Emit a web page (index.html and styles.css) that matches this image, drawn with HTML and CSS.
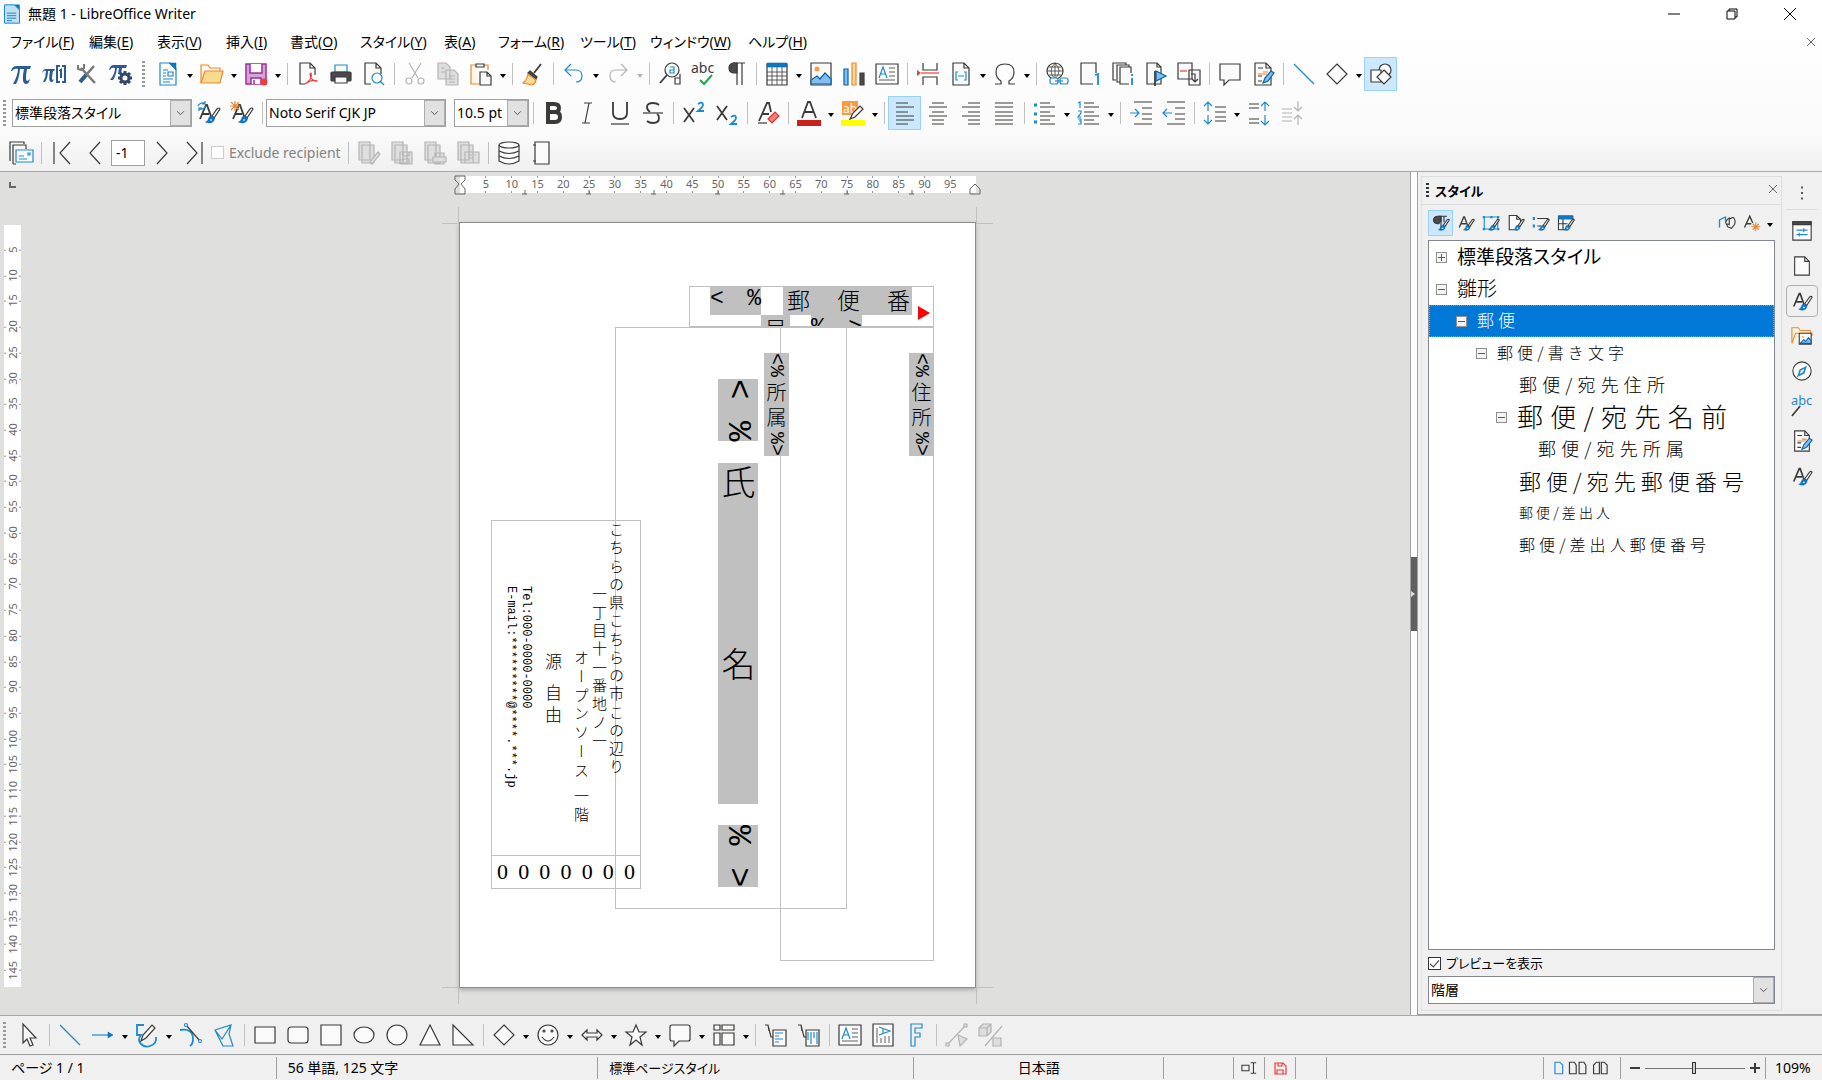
FILE: index.html
```html
<!DOCTYPE html>
<html lang="ja">
<head>
<meta charset="utf-8">
<title>無題 1 - LibreOffice Writer</title>
<link rel="stylesheet" href="styles.css">
</head>
<body>
<svg class="defs" aria-hidden="true">
  <symbol id="brush" viewBox="0 0 24 24"><path class="paper" d="M15 15l5-7q2-2 3 0l-6 9z"/><path class="bluefill" d="M14.500 15c-4 0-2 5-6 6 4 2 9 1 9-4z"/><path class="tip" d="M13 19h2"/></symbol>
  <symbol id="styleA" viewBox="0 0 24 24"><path class="thick" d="M3 18L9 4h1l5 14M5 13h7"/><use href="#brush"/></symbol>
  <symbol id="pencil" viewBox="0 0 24 24"><path class="sky" d="M12 21l2-5 6-7 3 2-6 8z"/></symbol>
  <symbol id="note" viewBox="0 0 24 24"><path class="paper" d="M4 1h11l5 5v17H4zM15 1v5h5"/><path d="M7 6h5M7 14h4M7 19h4"/><path class="o" d="M12 10h5M7 12h9"/><use href="#pencil"/></symbol>
  <symbol id="chev" viewBox="0 0 12 12"><path d="M2 4l4 4 4-4"/></symbol>
</svg>

<header class="top">
  <div class="titlebar">
    <svg class="i logo" viewBox="0 0 24 24"><path class="b lightblue" d="M3 1h12l6 6v16H3z"/><path class="bluefill" d="M15 1h6v6z"/><path class="b" d="M6 11h11M6 14h11M6 17h11M6 20h6"/></svg>
    <h1>無題 1 - LibreOffice Writer</h1>
    <div class="winbtns">
      <button aria-label="最小化"><svg viewBox="0 0 12 12"><path d="M0 6h12"/></svg></button>
      <button aria-label="元に戻す"><svg viewBox="0 0 12 12"><path d="M1 3h8v8H1zM3 3V1h8v8H9"/></svg></button>
      <button aria-label="閉じる"><svg viewBox="0 0 12 12"><path d="M0 0l12 12M12 0L0 12"/></svg></button>
    </div>
  </div>
  <nav class="menubar">
    <button class="kana">ファイル(<u>F</u>)</button><button>編集(<u>E</u>)</button><button>表示(<u>V</u>)</button><button>挿入(<u>I</u>)</button><button>書式(<u>O</u>)</button><button class="kana">スタイル(<u>Y</u>)</button><button>表(<u>A</u>)</button><button class="kana">フォーム(<u>R</u>)</button><button class="kana">ツール(<u>T</u>)</button><button class="kana">ウィンドウ(<u>W</u>)</button><button class="kana">ヘルプ(<u>H</u>)</button>
    <button class="closedoc" aria-label="文書を閉じる"><svg viewBox="0 0 12 12"><path d="M2 2l8 8M10 2l-8 8"/></svg></button>
  </nav>

  <div class="bar bar1">
    <button class="tb" aria-label="数式"><svg class="i pi" viewBox="0 0 24 24"><path d="M2 9Q3 4 8 4h14l-1 3h-3q-2 11 0 12 1 0 3-2-1 5-4 5-5 0-2-15h-4q-1 10-4 15H4Q9 13 9 7 5 6 3 9z"/></svg></button>
    <button class="tb" aria-label="数式番号"><svg class="i pi" viewBox="0 0 24 24"><path d="M0 11q1-4 4-4h9l-1 2h-1q-2 9 0 9l1-1q-1 4-3 3-3-1-1-11H6Q6 16 3 20H1q3-5 3-11-2-1-4 2zM14 3h4v2h-2v14h2v2h-4zM20 3h4v18h-4v-2h2V5h-2zM17 8l3-2v10h-2V9h-1z"/></svg></button>
    <button class="tb" aria-label="ツール"><svg class="i" viewBox="0 0 24 24"><path class="metal" d="M6 6l14 15"/><path class="metal" d="M19 4L12 12"/><path class="handle" d="M11 13l-6 7"/><path class="metal ring" d="M3 3v4l3 1 3-2V2"/></svg></button>
    <button class="tb" aria-label="数式設定"><svg class="i pi" viewBox="0 0 24 24"><path d="M1 8q1-5 5-5h13l-1 3h-4l-1 6h-3l1-6H9q-1 8-4 12H2Q7 12 7 6 3 5 2 8z"/><circle class="gear" cx="17" cy="16" r="4"/><path class="teeth" d="M17 9v3M17 20v3M10 16h3M21 16h3M12 11l2 2M20 19l2 2M22 11l-2 2M12 21l2-2"/></svg></button>
    <span class="grip"></span>
    <button class="tb" aria-label="新規"><svg class="i" viewBox="0 0 24 24"><path class="b paper" d="M4 1h10l6 6v16H4z"/><path class="bluefill" d="M13 1h7v7z"/><path class="b" d="M7 8h5M7 11h3M7 14h3M7 17h10M7 20h7M12 10h5v4h-5z"/></svg></button><button class="dd" aria-label="新規の一覧"></button>
    <button class="tb" aria-label="開く"><svg class="i" viewBox="0 0 24 24"><path class="o cream" d="M1 21V3h7l2 3h10v3"/><path class="o sand" d="M1 21L5 9h18l-3 12z"/></svg></button><button class="dd" aria-label="最近使用したファイル"></button>
    <button class="tb" aria-label="保存"><svg class="i" viewBox="0 0 24 24"><path class="p lilac" d="M2 2h20v20H2z"/><path class="p" d="M6 2v9h12V2M7 22v-6h10v6M10 22v-4"/><circle class="redfill" cx="20" cy="20" r="3.500"/></svg></button><button class="dd" aria-label="保存の一覧"></button>
    <span class="sep"></span>
    <button class="tb" aria-label="PDF"><svg class="i" viewBox="0 0 24 24"><path class="paper" d="M9 22H4V1h10l5 5v7M14 1v5h5"/><path class="r" d="M9 22q8-5 6-11-2 0 0 5 3 4 6 3-5-2-12 3"/></svg></button>
    <button class="tb" aria-label="印刷"><svg class="i" viewBox="0 0 24 24"><path class="b paper" d="M6 3h12v7H6z"/><rect class="dark" x="2" y="10" width="20" height="9" rx="1"/><path class="paper" d="M6 15h12v6H6z"/></svg></button>
    <button class="tb" aria-label="印刷プレビュー"><svg class="i" viewBox="0 0 24 24"><path class="paper" d="M9 22H3V1h11l5 5v6M14 1v5h5"/><circle class="b paper" cx="15" cy="16" r="5"/><path class="b" d="M18 19l4 4"/></svg></button>
    <span class="sep"></span>
    <button class="tb off" aria-label="切り取り"><svg class="i" viewBox="0 0 24 24"><path d="M6 1l9 15M18 1L9 16"/><circle cx="6" cy="19" r="3"/><circle cx="18" cy="19" r="3"/></svg></button>
    <button class="tb off" aria-label="コピー"><svg class="i" viewBox="0 0 24 24"><path class="ash" d="M2 17V1h8l4 4v12zM10 8h8l4 4v11H10z"/><path d="M5 6h4M5 10h4M13 14h6M13 17h6M13 20h6"/></svg></button>
    <button class="tb" aria-label="貼り付け"><svg class="i" viewBox="0 0 24 24"><path class="o cream" d="M7 3H2v19h8M15 3h4v5"/><path d="M7 5V2h8v3z"/><path class="paper" d="M11 10h7l4 4v9H11zM18 10v4h4"/></svg></button><button class="dd" aria-label="貼り付け形式"></button>
    <span class="sep"></span>
    <button class="tb" aria-label="書式のコピー"><svg class="i" viewBox="0 0 24 24"><path class="thick" d="M20 2l-7 9"/><path class="dark" d="M9 9l7 6-1 2-8-6z"/><path class="o sand" d="M7 12l8 6q-1 4-4 5L2 21q4-3 5-9z"/></svg></button>
    <span class="sep"></span>
    <button class="tb" aria-label="元に戻す"><svg class="i" viewBox="0 0 24 24"><path class="b" d="M9 2L3 8l6 6M3 8h11q6 0 6 6t-6 6"/></svg></button><button class="dd" aria-label="元に戻す一覧"></button>
    <button class="tb off" aria-label="やり直し"><svg class="i" viewBox="0 0 24 24"><path d="M15 2l6 6-6 6M21 8H10q-6 0-6 6t6 6"/></svg></button><button class="dd off" aria-label="やり直し一覧"></button>
    <span class="sep"></span>
    <button class="tb" aria-label="検索と置換"><svg class="i" viewBox="0 0 24 24"><circle class="paper" cx="14" cy="8" r="7"/><path class="thick" d="M9 13l-7 8"/><path class="b" d="M12 5h4v6h-4V8h4"/><path d="M22 12v10h-5v-6h5"/></svg></button>
    <button class="tb" aria-label="スペルチェック"><svg class="i" viewBox="0 0 24 24"><text x="0" y="11">abc</text><path class="gr" d="M9 18l4 4 8-9"/></svg></button>
    <button class="tb" aria-label="編集記号"><svg class="i" viewBox="0 0 24 24"><path d="M9 1h12M13 1v22M18 1v22"/><path class="dark" d="M13 1H9Q5 2 5 6t4 5h4z"/></svg></button>
    <span class="sep"></span>
    <button class="tb" aria-label="表"><svg class="i" viewBox="0 0 24 24"><path class="paper" d="M2 2h20v21H2z"/><path class="hair" d="M2 10h20M2 14h20M2 18h20M7 5v18M12 5v18M17 5v18"/><path class="bluefill" d="M2 1h20v4H2z"/></svg></button><button class="dd" aria-label="表の大きさ"></button>
    <button class="tb" aria-label="画像"><svg class="i" viewBox="0 0 24 24"><path class="paper" d="M2 1h20v22H2z"/><circle class="orangefill" cx="8" cy="7" r="2.500"/><path class="sky" d="M2 22v-4l6-4 3 3 5-6 6 6v5z"/></svg></button>
    <button class="tb" aria-label="グラフ"><svg class="i" viewBox="0 0 24 24"><path class="sky" d="M2 7h4v16H2z"/><path class="o sand" d="M10 1h4v22h-4z"/><path class="dark" d="M18 11h4v12h-4z"/></svg></button>
    <button class="tb" aria-label="テキストボックス"><svg class="i" viewBox="0 0 24 24"><path class="paper" d="M1 2h22v20H1z"/><path class="b" d="M4 16L8 5l4 11M5 12h6"/><path class="hair" d="M14 6h6M14 10h6M14 14h6M4 18h16"/></svg></button>
    <span class="sep"></span>
    <button class="tb" aria-label="改ページ"><svg class="i" viewBox="0 0 24 24"><path d="M7 1v7h14V1M7 23v-8h14v8"/><path class="r" d="M5 11h18"/><path class="redfill" d="M1 8l4 3-4 3z"/></svg></button>
    <button class="tb" aria-label="フィールド"><svg class="i" viewBox="0 0 24 24"><path class="paper" d="M4 1h11l5 5v17H4zM15 1v5h5"/><path class="b" d="M9 10H7v8h2M15 10h2v8h-2M9 14h6"/></svg></button><button class="dd" aria-label="フィールド一覧"></button>
    <button class="tb" aria-label="特殊文字"><svg class="i" viewBox="0 0 24 24"><path d="M2 22h6v-3Q3 16 3 10q0-8 9-8t9 8q0 6-5 9v3h6"/></svg></button><button class="dd" aria-label="特殊文字一覧"></button>
    <span class="sep"></span>
    <button class="tb" aria-label="ハイパーリンク"><svg class="i" viewBox="0 0 24 24"><circle cx="10" cy="9" r="8"/><path class="hair" d="M2 9h16M4 5h12M4 13h12M10 1v16M10 1q-8 8 0 16M10 1q8 8 0 16"/><rect class="b paper" x="5" y="16" width="8" height="6" rx="2"/><rect class="b paper" x="15" y="16" width="8" height="6" rx="2"/><path class="b" d="M10 19h8"/></svg></button>
    <button class="tb" aria-label="脚注"><svg class="i" viewBox="0 0 24 24"><path class="paper" d="M18 11V1H3v21h12"/><path class="b thick" d="M17 13l3-1v11"/></svg></button>
    <button class="tb" aria-label="文末脚注"><svg class="i" viewBox="0 0 24 24"><path d="M5 18H2V1h13v2M9 20H6V3h12v2"/><path class="paper" d="M18 22H9V5h11v6"/><path class="b thick" d="M21 16v7M21 12v2"/></svg></button>
    <button class="tb" aria-label="ブックマーク"><svg class="i" viewBox="0 0 24 24"><path class="paper" d="M3 22V1h10l4 4v17zM13 1v4h4"/><path class="thick" d="M11 9v15"/><path class="sky" d="M12 9l10 5-10 5z"/></svg></button>
    <button class="tb" aria-label="相互参照"><svg class="i" viewBox="0 0 24 24"><path class="paper" d="M1 1h14v16H1zM12 8h11v15H12z"/><path class="r" d="M3 9h7"/><path d="M14 12h4v7M15 17l3 3 3-3"/></svg></button>
    <span class="sep"></span>
    <button class="tb" aria-label="コメント"><svg class="i" viewBox="0 0 24 24"><path class="paper" d="M2 2h20v16H11l-5 5v-5H2z"/></svg></button>
    <button class="tb" aria-label="変更の記録"><svg class="i" viewBox="0 0 24 24"><use href="#note"/></svg></button>
    <span class="sep"></span>
    <button class="tb" aria-label="線"><svg class="i" viewBox="0 0 24 24"><path class="b" d="M2 2l20 20"/></svg></button>
    <button class="tb" aria-label="図形"><svg class="i" viewBox="0 0 24 24"><path class="paper" d="M12 2l10 10-10 10L2 12z"/></svg></button><button class="dd" aria-label="図形一覧"></button>
    <button class="tb on" aria-label="図形描画"><svg class="i" viewBox="0 0 24 24"><circle class="paper" cx="16" cy="8" r="6"/><path class="paper" d="M2 8h10v12H2z"/><path class="paper" d="M15 8l7 7-7 7-7-7z"/></svg></button>
  </div>

  <div class="bar bar2">
    <span class="grip"></span>
    <span class="combo w180"><select class="kana" aria-label="段落スタイル"><option>標準段落スタイル</option></select><svg class="chev"><use href="#chev"/></svg></span>
    <button class="tb" aria-label="スタイルの更新"><svg class="i" viewBox="0 0 24 24"><use href="#styleA"/><path class="b" d="M1 5q2-4 7-3M8 0v3H5M9 5q-2 4-7 3M2 10V7h3"/></svg></button>
    <button class="tb" aria-label="新規スタイル"><svg class="i" viewBox="0 0 24 24"><use href="#styleA"/><path class="o" d="M5 0v10M0 5h10M1 1l8 8M9 1L1 9"/></svg></button>
    <span class="sep"></span>
    <span class="combo w180"><select aria-label="フォント名"><option>Noto Serif CJK JP</option></select><svg class="chev"><use href="#chev"/></svg></span>
    <span class="combo w75"><select aria-label="フォントサイズ"><option>10.5 pt</option></select><svg class="chev"><use href="#chev"/></svg></span>
    <span class="sep"></span>
    <button class="tb" aria-label="太字"><svg class="i" viewBox="0 0 24 24"><path class="heavy" d="M6 3h6q5 0 5 4t-5 4H6zM6 11h7q5 0 5 5t-5 5H6z"/></svg></button>
    <button class="tb" aria-label="斜体"><svg class="i" viewBox="0 0 24 24"><path d="M9 2h8M7 22h8M14 2l-4 20"/></svg></button>
    <button class="tb" aria-label="下線"><svg class="i" viewBox="0 0 24 24"><path class="thick" d="M5 1v11q0 6 7 6t7-6V1"/><path d="M3 23h18"/></svg></button>
    <button class="tb" aria-label="取り消し線"><svg class="i" viewBox="0 0 24 24"><path class="thick" d="M18 4q-2-2-6-2-6 0-6 4 0 3 3 5M16 13q2 1 2 4 0 5-6 5-4 0-6-2"/><path d="M2 12h20"/></svg></button>
    <span class="sep"></span>
    <button class="tb" aria-label="上付き"><svg class="i" viewBox="0 0 24 24"><path class="thick" d="M2 7l10 14M12 7L2 21"/><path class="b thick" d="M16 3q5-3 5 1 0 2-5 6h6"/></svg></button>
    <button class="tb" aria-label="下付き"><svg class="i" viewBox="0 0 24 24"><path class="thick" d="M2 5l10 14M12 5L2 19"/><path class="b thick" d="M16 16q5-3 5 1 0 2-5 6h6"/></svg></button>
    <span class="sep"></span>
    <button class="tb" aria-label="書式のクリア"><svg class="i" viewBox="0 0 24 24"><path class="thick" d="M3 20L11 2h2l2 9M6 13h7"/><path d="M2 22h9"/><path class="pink" d="M12 18l7-7 4 4-7 7z"/></svg></button>
    <span class="sep"></span>
    <button class="tb" aria-label="文字の色"><svg class="i" viewBox="0 0 24 24"><path class="thick" d="M5 17L11 1h2l6 16M7 11h10"/><path class="crimson" d="M0 19h24v6H0z"/></svg></button><button class="dd" aria-label="文字の色一覧"></button>
    <button class="tb" aria-label="蛍光ペン"><svg class="i" viewBox="0 0 24 24"><path class="orangefill" d="M1 0h16v14H1z"/><text class="wt" x="2" y="12">ab</text><path class="paper" d="M9 18l3-6 7-7 3 3-8 8z"/><path class="yellow" d="M0 19h24v6H0z"/></svg></button><button class="dd" aria-label="蛍光ペン一覧"></button>
    <span class="sep"></span>
    <button class="tb on" aria-label="左揃え"><svg class="i" viewBox="0 0 24 24"><path d="M3 2h12M3 6h18M3 11h12M3 15h18M3 19h18M3 23h12"/></svg></button>
    <button class="tb" aria-label="中央揃え"><svg class="i" viewBox="0 0 24 24"><path d="M6 2h12M3 6h18M6 11h12M3 15h18M6 19h12M6 23h12"/></svg></button>
    <button class="tb" aria-label="右揃え"><svg class="i" viewBox="0 0 24 24"><path d="M9 2h12M3 6h18M9 11h12M3 15h18M9 19h12M9 23h12"/></svg></button>
    <button class="tb" aria-label="両端揃え"><svg class="i" viewBox="0 0 24 24"><path d="M3 2h18M3 6h18M3 11h18M3 15h18M3 19h18M3 23h18"/></svg></button>
    <span class="sep"></span>
    <button class="tb" aria-label="箇条書き"><svg class="i" viewBox="0 0 24 24"><path d="M7 2h10M7 6h15M7 11h10M7 15h15M7 19h10M7 23h15"/><path class="b bullet" d="M1 4h3M1 13h3M1 21h3"/></svg></button><button class="dd" aria-label="箇条書き一覧"></button>
    <button class="tb" aria-label="番号付け"><svg class="i" viewBox="0 0 24 24"><path d="M7 2h10M7 6h15M7 11h10M7 15h15M7 19h10M7 23h15"/><path class="b" d="M1 2l2-1v6M1 10h3v2l-3 4h3M1 18h3v5H1M2 20h2"/></svg></button><button class="dd" aria-label="番号付け一覧"></button>
    <span class="sep"></span>
    <button class="tb" aria-label="インデントを増やす"><svg class="i" viewBox="0 0 24 24"><path d="M5 1h18M13 7h10M13 13h10M13 18h10M5 23h18"/><path class="b" d="M1 12h9M6 8l4 4-4 4"/></svg></button>
    <button class="tb" aria-label="インデントを減らす"><svg class="i" viewBox="0 0 24 24"><path d="M5 1h18M13 7h10M13 13h10M13 18h10M5 23h18"/><path class="b" d="M1 12h9M5 8l-4 4 4 4"/></svg></button>
    <span class="sep"></span>
    <button class="tb" aria-label="行間"><svg class="i" viewBox="0 0 24 24"><path d="M12 6h11M12 11h11M12 16h11M12 20h11"/><path class="b" d="M5 1v9M1 5l4-4 4 4M5 14v9M1 19l4 4 4-4"/></svg></button><button class="dd" aria-label="行間一覧"></button>
    <button class="tb" aria-label="段落間隔を増やす"><svg class="i" viewBox="0 0 24 24"><path d="M2 3h10M2 7h10M2 18h10M2 22h10"/><path class="b" d="M18 1v9M14 5l4-4 4 4M18 14v10M14 20l4 4 4-4"/></svg></button>
    <button class="tb off" aria-label="段落間隔を減らす"><svg class="i" viewBox="0 0 24 24"><path d="M2 8h10M2 12h10M2 16h10M2 20h10M18 0v10M14 6l4 4 4-4M18 24V14M14 18l4-4 4 4"/></svg></button>
  </div>

  <div class="bar bar3">
    <button class="tb" aria-label="差し込み印刷"><svg class="i" viewBox="0 0 24 24"><path d="M1 20V1h14v2M4 23V4h13v4M4 23h3"/><path class="b paper" d="M7 9h17v12H7z"/><path class="b" d="M10 15h5M10 18h8M19 12h2v2h-2z"/></svg></button>
    <span class="sep"></span>
    <button class="tb" aria-label="最初"><svg class="i" viewBox="0 0 24 24"><path d="M4 1v22M20 1L10 12l10 11"/></svg></button>
    <button class="tb" aria-label="前"><svg class="i" viewBox="0 0 24 24"><path d="M17 1L7 12l10 11"/></svg></button>
    <input class="num" type="text" value="-1" aria-label="レコード番号">
    <button class="tb" aria-label="次"><svg class="i" viewBox="0 0 24 24"><path d="M7 1l10 11L7 23"/></svg></button>
    <button class="tb" aria-label="最後"><svg class="i" viewBox="0 0 24 24"><path d="M4 1l10 11L4 23M19 1v22"/></svg></button>
    <label class="excl"><input type="checkbox" disabled>Exclude recipient</label>
    <span class="sep"></span>
    <button class="tb off" aria-label="文書の編集"><svg class="i" viewBox="0 0 24 24"><path class="ash" d="M2 1h11v18H2zM5 4h12v18H5z"/><path class="ash" d="M13 21l8-10 2 2-8 10z"/></svg></button>
    <button class="tb off" aria-label="文書の保存"><svg class="i" viewBox="0 0 24 24"><path class="ash" d="M2 1h11v18H2zM5 4h12v18H5zM10 11h12v12H10z"/><path d="M13 11v4h6v-4M13 23v-5h6v5"/></svg></button>
    <button class="tb off" aria-label="文書の印刷"><svg class="i" viewBox="0 0 24 24"><path class="ash" d="M2 1h11v18H2zM5 4h12v18H5zM12 12h9v11h-9z"/><path class="ash" d="M10 16h13v5H10z"/></svg></button>
    <button class="tb off" aria-label="メール送信"><svg class="i" viewBox="0 0 24 24"><path class="ash" d="M2 1h11v18H2zM5 4h12v18H5zM9 11h14v11H9z"/><path d="M12 14h4M12 17h5M19 14h1"/></svg></button>
    <span class="sep"></span>
    <button class="tb" aria-label="データソース"><svg class="i" viewBox="0 0 24 24"><path class="paper" d="M2 4v16q10 6 20 0V4"/><ellipse class="paper" cx="12" cy="4" rx="10" ry="3"/><path d="M2 10q10 5 20 0M2 15q10 5 20 0"/></svg></button>
    <button class="tb" aria-label="アドレス帳"><svg class="i" viewBox="0 0 24 24"><path class="paper" d="M5 1h14v22H5zM3 4h3M3 20h3"/></svg></button>
  </div>
</header>

<main class="work">
  <section class="canvas">
    <svg class="corner" viewBox="0 0 8 8"><path d="M1 0v5h6"/></svg>
    <div class="hruler">
      <span>5</span><span>10</span><span>15</span><span>20</span><span>25</span><span>30</span><span>35</span><span>40</span><span>45</span><span>50</span><span>55</span><span>60</span><span>65</span><span>70</span><span>75</span><span>80</span><span>85</span><span>90</span><span>95</span>
      <svg class="marks" viewBox="0 0 528 20"><path d="M1 1h10v4l-4 4 4 5v5H1v-5l4-5-4-4zM516 19v-5l5-5 5 5v5z"/><path d="M68 19h5m-2-4v4M132 19h5m-2-4v4M197 19h5m-2-4v4M261 19h5m-2-4v4M326 19h5m-2-4v4M390 19h5m-2-4v4M455 19h5m-2-4v4"/></svg>
    </div>
    <div class="vruler">
      <span>5</span><span>10</span><span>15</span><span>20</span><span>25</span><span>30</span><span>35</span><span>40</span><span>45</span><span>50</span><span>55</span><span>60</span><span>65</span><span>70</span><span>75</span><span>80</span><span>85</span><span>90</span><span>95</span><span>100</span><span>105</span><span>110</span><span>115</span><span>120</span><span>125</span><span>130</span><span>135</span><span>140</span><span>145</span>
    </div>
    <article class="page">
      <i class="crop tl"></i><i class="crop tr"></i><i class="crop bl"></i><i class="crop br"></i>
      <div class="frame zip">
        <div class="ziprow one"><span class="fld a"><b class="lat">&lt;</b><b class="lat">%</b></span><span class="fld c"><b>郵</b><b>便</b><b>番</b></span></div>
        <div class="ziprow two"><span class="fld d"><b>号</b></span><span class="fld e"><b class="lat">%</b><b class="lat">&gt;</b></span></div>
        <i class="more"></i>
      </div>
      <div class="frame name">
        <span class="fld n1"><b class="lat">&lt;</b><b class="lat">%</b></span><span class="fld n2"><b>氏</b><b>名</b></span><span class="fld n3"><b class="lat">%</b><b class="lat">&gt;</b></span>
      </div>
      <div class="frame addr"></div>
      <p class="fld v org"><span class="lat">&lt;%</span>所属<span class="lat">%&gt;</span></p>
      <p class="fld v home"><span class="lat">&lt;%</span>住所<span class="lat">%&gt;</span></p>
      <div class="frame sender">
        <p class="v s1">こちらの県こちらの市この辺り</p>
        <p class="v s2">一丁目十一番地ノ一</p>
        <p class="v s3">オープンソース 一階</p>
        <p class="v s4">源 自由</p>
        <p class="v s5">Tel:000-0000-0000</p>
        <p class="v s6">E-mail:*********@****.***.jp</p>
      </div>
      <div class="frame szip"><b>0</b><b>0</b><b>0</b><b>0</b><b>0</b><b>0</b><b>0</b></div>
    </article>
  </section>
  <div class="splitter"><button aria-label="サイドバーを隠す"></button></div>
  <aside class="sidebar">
    <div class="deck">
      <div class="deckhead"><span class="dots"></span><h2 class="kana">スタイル</h2><button aria-label="閉じる"><svg viewBox="0 0 12 12"><path d="M2 2l8 8M10 2l-8 8"/></svg></button></div>
      <div class="kinds">
        <button class="sb on" aria-label="段落スタイル"><svg class="i" viewBox="0 0 24 24"><path class="dark" d="M12 3H7Q2 4 2 8t5 5h2l3-4z"/><path d="M9 3h11M12 3v17M16 3v8"/><use href="#brush"/></svg></button>
        <button class="sb" aria-label="文字スタイル"><svg class="i" viewBox="0 0 24 24"><use href="#styleA"/></svg></button>
        <button class="sb" aria-label="枠スタイル"><svg class="i" viewBox="0 0 24 24"><path class="b" d="M3 4h18v16H3z"/><path class="b knobs" d="M1 4h3M11 4h3M20 4h3M1 20h3M20 20h3"/><use href="#brush"/></svg></button>
        <button class="sb" aria-label="ページスタイル"><svg class="i" viewBox="0 0 24 24"><path class="paper" d="M9 21H3V2h10l5 5v4M13 2v5h5"/><use href="#brush"/></svg></button>
        <button class="sb" aria-label="リストスタイル"><svg class="i" viewBox="0 0 24 24"><path class="b heavy" d="M1 6h3M1 16h3"/><path d="M7 6h15M7 16h5"/><use href="#brush"/></svg></button>
        <button class="sb" aria-label="表スタイル"><svg class="i" viewBox="0 0 24 24"><path class="paper" d="M10 21H2V3h19v6M8 6v15M2 13h12"/><path class="bluefill" d="M2 2h19v5H2z"/><use href="#brush"/></svg></button>
        <span class="spring"></span>
        <button class="sb" aria-label="塗りつぶし"><svg class="i" viewBox="0 0 24 24"><path class="b thick" d="M2 18V8l8-4v6"/><path d="M10 12q2-6 6-7M13 17l-2-4 4 1V7q3-3 6-2 3 4 1 9l-4 5z"/></svg></button>
        <button class="sb" aria-label="アクション"><svg class="i" viewBox="0 0 24 24"><path class="thick" d="M2 18L9 3l4 9M4 13h7"/><path class="o" d="M17 11v12M11 17h12M13 13l8 8M21 13l-8 8"/></svg></button><button class="dd" aria-label="アクション一覧"></button>
      </div>
      <ul class="tree">
        <li class="l0 t1"><button class="ex plus" aria-label="展開"></button><span class="kana">標準段落スタイル</span></li>
        <li class="l0 t2"><button class="ex" aria-label="折りたたみ"></button><span>雛形</span></li>
        <li class="l1 t3 sel"><button class="ex" aria-label="折りたたみ"></button><span>郵便</span></li>
        <li class="l2 t4"><button class="ex" aria-label="折りたたみ"></button><span>郵便/書き文字</span></li>
        <li class="l4 t5"><span>郵便/宛先住所</span></li>
        <li class="l3 t6"><button class="ex" aria-label="折りたたみ"></button><span>郵便/宛先名前</span></li>
        <li class="l5 t5"><span>郵便/宛先所属</span></li>
        <li class="l4 t8"><span>郵便/宛先郵便番号</span></li>
        <li class="l4 t9"><span>郵便/差出人</span></li>
        <li class="l4 t10"><span>郵便/差出人郵便番号</span></li>
      </ul>
      <label class="prev kana"><input type="checkbox" checked>プレビューを表示</label>
      <span class="combo wide"><select aria-label="フィルター"><option>階層</option></select><svg class="chev"><use href="#chev"/></svg></span>
    </div>
    <nav class="tabs">
      <button class="menu" aria-label="設定"><svg class="i" viewBox="0 0 24 24"><path class="thick" d="M12 5v2M12 11v2M12 17v2"/></svg></button>
      <button aria-label="プロパティ"><svg class="i" viewBox="0 0 24 24"><path class="paper" d="M2 2h20v20H2z"/><path class="dark" d="M2 2h20v3H2z"/><path class="b" d="M6 11h12M6 16h12M14 9v4M9 14v4"/></svg></button>
      <button aria-label="ページ"><svg class="i" viewBox="0 0 24 24"><path class="paper" d="M4 2h11l5 5v15H4zM15 2v5h5"/></svg></button>
      <button class="cur" aria-label="スタイル"><svg class="i" viewBox="0 0 24 24"><use href="#styleA"/></svg></button>
      <button aria-label="ギャラリー"><svg class="i" viewBox="0 0 24 24"><path class="o cream" d="M1 20V3h7l2 3h11v3M1 20L5 9h18v3"/><path class="paper" d="M9 9h13v12H9z"/><path class="sky" d="M10 20l4-4 2 2 3-4 3 3v3z"/><circle class="orangefill" cx="13" cy="13" r="1"/></svg></button>
      <button aria-label="ナビゲーター"><svg class="i" viewBox="0 0 24 24"><circle class="paper" cx="12" cy="12" r="10"/><path class="b thick" d="M16 8l-2 6-6 3 2-6z"/></svg></button>
      <button aria-label="スタイルインスペクター"><svg class="i" viewBox="0 0 24 24"><text class="bt" x="0" y="11">abc</text><path class="thick" d="M1 23l9-11"/></svg></button>
      <button aria-label="変更の管理"><svg class="i" viewBox="0 0 24 24"><use href="#note"/></svg></button>
      <button aria-label="スタイル検査"><svg class="i" viewBox="0 0 24 24"><use href="#styleA"/></svg></button>
    </nav>
  </aside>
</main>

<footer>
  <div class="bar draw">
    <span class="grip"></span>
    <button class="tb" aria-label="選択"><svg class="i" viewBox="0 0 24 24"><path class="paper" d="M6 1v19l4-4 3 7 3-1-3-7h6z"/></svg></button>
    <span class="sep"></span>
    <button class="tb" aria-label="線"><svg class="i" viewBox="0 0 24 24"><path class="b" d="M2 2l20 20"/></svg></button>
    <button class="tb" aria-label="矢印線"><svg class="i" viewBox="0 0 24 24"><path class="b" d="M1 12h18"/><path class="bluefill" d="M17 9l5 3-5 3z"/></svg></button><button class="dd" aria-label="矢印一覧"></button>
    <button class="tb" aria-label="曲線"><svg class="i" viewBox="0 0 24 24"><path class="b thick" d="M9 2H2v10h4q-4 5 0 9t9 2q7-2 6-9"/><path class="paper" d="M6 18l2-6L17 2l3 3-9 10z"/></svg></button><button class="dd" aria-label="曲線一覧"></button>
    <button class="tb" aria-label="コネクター"><svg class="i" viewBox="0 0 24 24"><path class="b thick" d="M1 7q13-2 13 9 0 5-3 7"/><path d="M7 2l14 16"/><circle class="b paper" cx="7" cy="2" r="1.500"/><circle class="b paper" cx="21" cy="18" r="1.500"/></svg></button>
    <button class="tb" aria-label="多角形"><svg class="i" viewBox="0 0 24 24"><path class="b" d="M3 7l16-5-2 9 4 12H11zM3 7l7 9 9-14"/></svg></button>
    <span class="sep"></span>
    <button class="tb" aria-label="長方形"><svg class="i" viewBox="0 0 24 24"><path class="paper" d="M2 4h20v16H2z"/></svg></button>
    <button class="tb" aria-label="角丸長方形"><svg class="i" viewBox="0 0 24 24"><rect class="paper" x="2" y="4" width="20" height="16" rx="3"/></svg></button>
    <button class="tb" aria-label="正方形"><svg class="i" viewBox="0 0 24 24"><path class="paper" d="M2 2h20v20H2z"/></svg></button>
    <button class="tb" aria-label="楕円"><svg class="i" viewBox="0 0 24 24"><ellipse class="paper" cx="12" cy="12" rx="10" ry="8"/></svg></button>
    <button class="tb" aria-label="円"><svg class="i" viewBox="0 0 24 24"><circle class="paper" cx="12" cy="12" r="10"/></svg></button>
    <button class="tb" aria-label="三角形"><svg class="i" viewBox="0 0 24 24"><path class="paper" d="M12 2l10 20H2z"/></svg></button>
    <button class="tb" aria-label="直角三角形"><svg class="i" viewBox="0 0 24 24"><path class="paper" d="M2 2l20 20H2z"/></svg></button>
    <span class="sep"></span>
    <button class="tb" aria-label="基本図形"><svg class="i" viewBox="0 0 24 24"><path class="paper" d="M12 2l10 10-10 10L2 12z"/></svg></button><button class="dd" aria-label="基本図形一覧"></button>
    <button class="tb" aria-label="記号図形"><svg class="i" viewBox="0 0 24 24"><circle class="paper" cx="12" cy="12" r="10"/><circle cx="8" cy="8" r="1"/><circle cx="16" cy="8" r="1"/><path d="M6 14q6 8 12 0"/></svg></button><button class="dd" aria-label="記号図形一覧"></button>
    <button class="tb" aria-label="ブロック矢印"><svg class="i" viewBox="0 0 24 24"><path class="paper" d="M2 12l5-5v3h10V7l5 5-5 5v-3H7v3z"/></svg></button><button class="dd" aria-label="矢印図形一覧"></button>
    <button class="tb" aria-label="星"><svg class="i" viewBox="0 0 24 24"><path class="paper" d="M12 2l3 7h7l-6 5 2 8-6-5-6 5 2-8-6-5h7z"/></svg></button><button class="dd" aria-label="星一覧"></button>
    <button class="tb" aria-label="吹き出し"><svg class="i" viewBox="0 0 24 24"><path class="paper" d="M4 2h16q2 0 2 2v12q0 2-2 2h-9l-5 5v-5H4q-2 0-2-2V4q0-2 2-2z"/></svg></button><button class="dd" aria-label="吹き出し一覧"></button>
    <button class="tb" aria-label="フローチャート"><svg class="i" viewBox="0 0 24 24"><path class="paper" d="M2 2h6v5H2zM10 2h12v5H10zM2 10h6v12H2zM10 10h12v12H10z"/></svg></button><button class="dd" aria-label="フローチャート一覧"></button>
    <span class="sep"></span>
    <button class="tb" aria-label="引き出し線"><svg class="i" viewBox="0 0 24 24"><path d="M1 2h3l3 12h3M4 2l1 6"/><path class="paper" d="M9 7h13v16H9z"/><path class="b" d="M11 10h8M11 13h4M11 16h8M11 19h4"/></svg></button>
    <button class="tb" aria-label="縦書き引き出し線"><svg class="i" viewBox="0 0 24 24"><path d="M1 2h3l3 12h3M4 2l1 6"/><path class="paper" d="M9 7h13v16H9z"/><path class="b" d="M11 9v8M14 9v12M17 9v6M20 9v12"/></svg></button>
    <span class="sep"></span>
    <button class="tb" aria-label="テキストボックス"><svg class="i" viewBox="0 0 24 24"><path class="paper" d="M1 2h22v20H1z"/><path class="b" d="M4 16L8 5l4 11M5 12h6"/><path class="hair" d="M14 6h6M14 10h6M14 14h6M4 18h16"/></svg></button>
    <button class="tb" aria-label="縦書きテキスト"><svg class="i" viewBox="0 0 24 24"><path class="paper" d="M2 1h20v22H2z"/><path class="b" d="M8 4l11 4-11 4M12 5v6"/><path class="hair" d="M6 5v15M10 15v5M14 13v7M18 13v7"/></svg></button>
    <button class="tb" aria-label="フォントワーク"><svg class="i" viewBox="0 0 24 24"><path class="b" d="M7 1h11v4h-7v5h5v4h-5v9H7z"/></svg></button>
    <span class="sep"></span>
    <button class="tb off" aria-label="制御点"><svg class="i" viewBox="0 0 24 24"><path d="M2 22L21 2"/><path class="ash" d="M13 12l9 4-7 7zM1 20h3v3H1zM19 1h3v3h-3z"/></svg></button>
    <button class="tb off" aria-label="押し出し"><svg class="i" viewBox="0 0 24 24"><path class="ash" d="M1 5l4-4h8v8l-4 4H1zM1 5h8v8M9 5l4-4M15 15h8v8h-8z"/><path d="M7 23L24 3"/></svg></button>
  </div>
  <div class="status">
    <span class="kana">ページ 1 / 1</span><span>56 単語, 125 文字</span><span class="kana small">標準ページスタイル</span><span class="mid">日本語</span><span></span>
    <span class="mid"><svg class="s" viewBox="0 0 18 14"><path d="M1 4h8v6H1zM11 1h6M14 1v12M11 13h6"/></svg></span>
    <span class="mid"><svg class="s red" viewBox="0 0 14 14"><path d="M2 2h8l3 3v8H2zM5 2v3h4V2M4 13V9h6v4"/></svg></span>
    <span></span><span></span>
    <span class="mid views"><svg class="s" viewBox="0 0 58 14"><path class="b" d="M1 1h5l3 3v9H1z"/><path d="M16 1h5l2 3v9h-7zM26 1h5l2 3v9h-7zM41 13V4l3-3h3v12zM49 13V1h3l3 3v9z"/></svg></span>
    <span class="zoom"><button aria-label="縮小"><svg viewBox="0 0 12 12"><path d="M1 6h10"/></svg></button><input type="range" min="0" max="100" value="49" aria-label="ズーム"><button aria-label="拡大"><svg viewBox="0 0 12 12"><path d="M1 6h10M6 1v10"/></svg></button></span>
    <span class="pct">109%</span>
  </div>
</footer>
</body>
</html>
```
FILE: styles.css
```css
* { box-sizing: border-box; }

html, body { height: 100%; }

body {
  margin: 0;
  display: flex;
  flex-direction: column;
  overflow: hidden;
  background: #f0f0f0;
  color: #000;
  font: 14px/20px "Noto Sans", "Noto Sans CJK JP", sans-serif;
}

button, input, select {
  font: inherit;
  color: inherit;
  margin: 0;
  padding: 0;
  border: 0;
  background: none;
}

h1, h2, p, ul { margin: 0; padding: 0; font: inherit; }
.kana { font-feature-settings: "palt"; }
.defs { display: none; }

/* ---- icon strokes and fills ---- */
svg { display: block; fill: none; stroke: #3a3a38; stroke-width: 1; }
.i { width: 24px; height: 24px; stroke-width: 1.2; overflow: visible; }
.i text, .i .bt { font: 14px "Noto Sans", sans-serif; stroke: none; fill: #3a3a38; }
.i .bt { fill: #1e8bcd; }
.i .wt { font-size: 12px; fill: #fff; }
.hair { stroke-width: .8; }
.thick { stroke-width: 1.8; }
.heavy { stroke-width: 4; }
.bullet { stroke-width: 3; }
.knobs { stroke-width: 3; }
.tip { stroke: #fff; }
.paper { fill: #fafafa; }
.b { stroke: #1e8bcd; }
.o { stroke: #ed8733; }
.p { stroke: #9b2f9b; stroke-width: 1.5; fill: #fff; }
.p.lilac { fill: #d9a3d9; }
.r { stroke: #ed3d3b; }
.gr { stroke: #18ab50; stroke-width: 2; }
.lightblue { fill: #bfe0f5; }
.bluefill { fill: #0f78c4; stroke: #0063b1; stroke-width: .5; }
.redfill { fill: #ed3d3b; stroke: none; }
.orangefill { fill: #ff9a3c; stroke: none; }
.cream { fill: #fff6e8; }
.sand { fill: #f8db8f; }
.sky { fill: #83beec; stroke: #0063b1; }
.dark { fill: #4a4a48; }
.pink { fill: #f08080; stroke: #d33; }
.crimson { fill: #c9211e; stroke: none; }
.yellow { fill: #ff0; stroke: none; }
.metal { stroke: #77787a; stroke-width: 2.5; }
.metal.ring { stroke-width: 2; }
.handle { stroke: #2c5a94; stroke-width: 4; }
.pi { fill: #2c5a94; stroke: none; }
.gear { fill: #fff; stroke: #33496b; stroke-width: 3; }
.teeth { stroke: #33496b; stroke-width: 3; }
.off .i, .off .i * { stroke: #b4b4b4; }
.off .ash { fill: #dedede; }

/* ---- title bar and menus ---- */
.top {
  background: linear-gradient(#fff 0, #fff 30px, #fafafa 135px, #f0f0f0 170px);
  border-bottom: 1px solid #a9aaa6;
}
.titlebar { display: flex; align-items: center; height: 28px; padding: 0 3px 0 2px; }
.logo { width: 20px; }
.titlebar h1 { flex: 1; padding-left: 6px; }
.winbtns { display: flex; }
.winbtns button { width: 58px; display: flex; justify-content: center; }
.winbtns svg { width: 12px; height: 12px; stroke: #000; overflow: visible; }
.menubar {
  display: grid;
  grid-template-columns: 79px 68px 69px 64px 70px 84px 54px 82px 70px 98px 1fr 17px;
  align-items: center;
  height: 28px;
  padding-left: 10px;
}
.menubar button { text-align: left; white-space: nowrap; }
.menubar u { text-underline-offset: 2px; }
.closedoc svg, .deckhead svg { width: 12px; height: 12px; stroke: #666; }

/* ---- toolbars ---- */
.bar { display: flex; align-items: center; height: 39px; white-space: nowrap; }
.bar1 { height: 36px; padding-left: 4px; }
.bar2 { height: 42px; }
.bar3 { height: 37px; padding-left: 4px; }
.tb {
  flex: none;
  width: 33px;
  height: 34px;
  display: flex;
  align-items: center;
  justify-content: center;
}
.on { background: #cce8ff; border: 1px solid #99d1ff; }
.dd {
  flex: none;
  width: 11px;
  height: 34px;
  display: flex;
  align-items: center;
  justify-content: center;
}
.dd::after {
  content: "";
  margin-top: 4px;
  border: 3px solid transparent;
  border-top: 4px solid #000;
  border-bottom: 0;
}
.dd.off::after { border-top-color: #b4b4b4; }
.sep { flex: none; width: 8px; height: 22px; display: flex; justify-content: center; }
.sep::before { content: ""; width: 1px; background: #c0c0c0; }
.grip { flex: none; width: 15px; height: 26px; display: flex; justify-content: center; }
.grip::before {
  content: "";
  width: 3px;
  background: repeating-linear-gradient(#999 0 2px, transparent 2px 4px);
}
.bar2 .grip, .draw .grip { width: 12px; padding-right: 3px; }
.combo {
  flex: none;
  display: flex;
  height: 28px;
  background: #fff;
  border: 1px solid #a0a0a0;
}
.combo select { flex: 1; min-width: 0; padding-left: 2px; appearance: none; outline: 0; }
.chev {
  width: 21px;
  height: 26px;
  padding: 7px 4px;
  background: #e1e1e1;
  border: 1px solid #adadad;
}
.w180 { width: 180px; }
.w180 + .w75 { margin-left: 8px; }
.w75 { width: 75px; }
.num { width: 34px; height: 26px; padding-left: 4px; background: #fff; border: 1px solid #a0a0a0; }
.excl { display: flex; align-items: center; gap: 5px; width: 133px; color: #838383; }
.excl input {
  appearance: none;
  width: 13px;
  height: 13px;
  background: #fff;
  border: 1px solid #ccc;
}

/* ---- work area ---- */
.work { flex: 1; display: flex; min-height: 0; background: #dfdfde; }
.canvas { flex: 1; position: relative; overflow: hidden; }
.corner { position: absolute; left: 9px; top: 10px; width: 8px; height: 8px; stroke: #666; stroke-width: 2; }
.hruler, .vruler {
  position: absolute;
  display: flex;
  background: #fff;
  color: #666;
  font-size: 11px;
  line-height: 15px;
}
.hruler { left: 460px; top: 4px; width: 516px; height: 17px; padding: 0 13px; }
.hruler span, .vruler span {
  flex: 1;
  text-align: center;
  background:
    linear-gradient(#999, #999) top / 1px 2px no-repeat,
    linear-gradient(#999, #999) bottom / 1px 2px no-repeat;
}
.marks { position: absolute; left: -6px; top: -1px; width: 528px; height: 20px; stroke: #666; }
.vruler { left: 4px; top: 53px; width: 17px; height: 762px; padding: 12px 0 4px; flex-direction: column; line-height: 17px; }
.vruler span {
  writing-mode: vertical-rl;
  transform: rotate(180deg);
  background:
    linear-gradient(#999, #999) left / 2px 1px no-repeat,
    linear-gradient(#999, #999) right / 2px 1px no-repeat;
}

.page {
  position: absolute;
  left: 459px;
  top: 50px;
  width: 517px;
  height: 766px;
  background: #fff;
  border: 1px solid #8c8c8a;
  box-shadow: 0 2px 4px #aaa;
  font-family: "Noto Sans CJK JP", sans-serif;
  font-weight: 300;
}
.page b { font-weight: 300; }
.page .lat { font-family: "Liberation Mono", monospace; }
.crop { position: absolute; width: 17px; height: 17px; border: 0 solid #c0c0c0; }
.tl { left: -18px; top: -16px; border-width: 0 1px 1px 0; }
.tr { right: -18px; top: -16px; border-width: 0 0 1px 1px; }
.bl { left: -18px; bottom: -17px; border-width: 1px 1px 0 0; }
.br { right: -18px; bottom: -17px; border-width: 1px 0 0 1px; }
.frame { position: absolute; border: 1px solid #c0c0c0; }
.fld { background: #c0c0c0; }
.v { position: absolute; writing-mode: vertical-rl; text-align: justify; text-align-last: justify; white-space: nowrap; }

.zip { left: 229px; top: 63px; width: 245px; height: 41px; font-size: 23px; line-height: 25px; }
.ziprow { display: flex; height: 28px; }
.ziprow .fld { display: flex; justify-content: space-between; }
.one { padding-left: 20px; gap: 22px; }
.two { height: 11px; padding-left: 71px; gap: 21px; overflow: hidden; line-height: 26px; }
.zip .a { width: 51px; }
.zip .c { width: 129px; padding: 0 2px 0 4px; }
.zip .d { width: 29px; justify-content: center; }
.zip .e { width: 51px; }
.more { position: absolute; right: 3px; top: 19px; border: 7px solid transparent; border-left: 12px solid #f00; border-right: 0; }

.name { left: 155px; top: 104px; width: 232px; height: 582px; }
.name .fld {
  position: absolute;
  left: 102px;
  width: 40px;
  display: flex;
  writing-mode: vertical-rl;
  justify-content: space-between;
  font-size: 34px;
  line-height: 40px;
}
.name .n1 { top: 51px; height: 62px; }
.name .n2 { top: 135px; height: 341px; padding: 2px 0 123px; }
.name .n3 { top: 497px; height: 62px; }
.addr { left: 320px; top: 104px; width: 154px; height: 634px; }
.org, .home { top: 130px; width: 25px; height: 103px; font-size: 20px; line-height: 25px; }
.org { left: 304px; }
.home { left: 449px; }

.sender { left: 31px; top: 297px; width: 150px; height: 336px; font-size: 15px; line-height: 18px; }
.s1 { right: 15px; top: 1px; height: 252px; }
.s2 { right: 32px; top: 65px; height: 162px; }
.s3 { right: 50px; top: 129px; height: 172px; }
.s4 { right: 78px; top: 132px; height: 70px; font-size: 17px; }
.s5, .s6 { top: 65px; font: 12px/16px "Liberation Mono", monospace; text-align-last: auto; }
.s5 { right: 106px; }
.s6 { right: 121px; }
.szip {
  left: 31px;
  top: 632px;
  width: 150px;
  height: 34px;
  display: flex;
  justify-content: space-around;
  align-items: center;
  font: 22px/32px "Liberation Serif", serif;
}

/* ---- sidebar ---- */
.splitter {
  width: 8px;
  display: flex;
  align-items: center;
  background: #fff;
  border: solid #a0a0a0;
  border-width: 0 1px;
}
.splitter button { width: 6px; height: 74px; background: #606060; display: flex; align-items: center; }
.splitter button::after { content: ""; border: 3px solid transparent; border-left: 4px solid #ddd; border-right: 0; }
.sidebar { flex: none; width: 404px; display: flex; background: #f0f0f0; border-bottom: 1px solid #a0a0a0; padding: 4px 0 3px 3px; }
.deck { width: 361px; border: 1px solid #dedede; display: flex; flex-direction: column; padding: 0 6px 6px; }
.deckhead { display: flex; align-items: center; height: 28px; margin: 0 -6px; border-bottom: 1px solid #dedede; }
.dots { width: 3px; height: 15px; margin: 0 6px 0 4px; background: repeating-linear-gradient(#333 0 2px, transparent 2px 4px); }
.deckhead h2 { flex: 1; font-size: 13px; font-weight: 600; }
.deckhead button { padding: 0 2px 4px 0; }
.kinds { display: flex; align-items: center; height: 35px; flex: none; }
.sb { width: 25px; height: 26px; display: flex; align-items: center; justify-content: center; }
.sb .i { width: 18px; height: 18px; stroke-width: 1.5; }
.spring { flex: 1; }
.tree { flex: 1; list-style: none; background: #fff; border: 1px solid #828790; font-family: "Noto Sans CJK JP", sans-serif; }
.tree li { display: flex; align-items: center; height: 32px; white-space: nowrap; font-weight: 300; }
.tree span { padding-bottom: 2px; text-align: justify; text-align-last: justify; }
.ex {
  flex: none;
  width: 11px;
  height: 11px;
  margin-right: 10px;
  border: 1px solid #919191;
  background: linear-gradient(#3b5ba5, #3b5ba5) center / 7px 1px no-repeat #f4f4f4;
}
.plus {
  background:
    linear-gradient(#3b5ba5, #3b5ba5) center / 7px 1px no-repeat,
    linear-gradient(#3b5ba5, #3b5ba5) center / 1px 7px no-repeat #f4f4f4;
}
.l0 { padding-left: 7px; }
.l1 { padding-left: 27px; }
.l2 { padding-left: 47px; }
.l3 { padding-left: 67px; }
.l4 { padding-left: 90px; }
.l5 { padding-left: 109px; }
.tree .t1 { font-size: 19px; font-weight: 400; }
.t2 { font-size: 20px; }
.t3 { font-size: 17px; }
.t3 span { width: 38px; }
.t4 { font-size: 16px; }
.t4 span { width: 127px; }
.t5 { font-size: 18px; }
.t5 span { width: 146px; }
.t6 { font-size: 26px; }
.t6 span { width: 210px; }
.t8 { font-size: 22px; }
.t8 span { width: 225px; }
.t9 { font-size: 14px; }
.t9 span { width: 91px; }
.t10 { font-size: 16px; }
.t10 span { width: 187px; }
.sel { background: #0078d7; color: #fff; outline: 1px dotted #e08a3c; outline-offset: -1px; }
.prev { display: flex; align-items: center; gap: 5px; height: 26px; font-size: 13px; }
.prev input { width: 13px; height: 13px; appearance: none; background: #fff; border: 1px solid #333; display: flex; align-items: center; justify-content: center; }
.prev input::after { content: ""; width: 4px; height: 8px; margin-bottom: 2px; border: solid #333; border-width: 0 1px 1px 0; transform: rotate(40deg); }
.wide { border-color: #828790; }

.tabs { flex: 1; display: flex; flex-direction: column; align-items: center; gap: 3px; }
.tabs button { width: 32px; height: 32px; display: flex; align-items: center; justify-content: center; }
.tabs .i { width: 22px; height: 22px; }
.tabs .menu { height: 34px; margin-bottom: 2px; border-bottom: 1px solid #dcdcdc; }
.tabs .cur { border: 1px solid #b0b0b0; border-radius: 4px; }

/* ---- drawing toolbar and status bar ---- */
footer { border-top: 1px solid #a9aaa6; }
.draw { height: 38px; }
.status {
  display: grid;
  grid-template-columns:
    minmax(0, 277fr) minmax(0, 322fr) minmax(0, 316fr) minmax(0, 251fr) minmax(0, 70fr)
    repeat(3, minmax(0, 31fr)) minmax(0, 217fr) 77px 145px 56px;
  height: 26px;
  padding: 2px 0 1px;
  border-top: 1px solid #a0a0a0;
}
.status > span { display: flex; align-items: center; padding-left: 11px; border-right: 1px solid #a0a0a0; white-space: nowrap; }
.status .small { font-size: 13px; }
.status .mid { padding: 0; justify-content: center; }
.status .pct { border: 0; padding-left: 9px; }
.s { height: 14px; stroke-width: 1.2; }
.mid .s { width: 16px; }
.views .s { width: 56px; }
.red { stroke: #ed3d3b; }
.status .zoom { gap: 4px; padding: 0 4px 0 8px; }
.zoom svg { width: 12px; height: 12px; stroke-width: 2; }
.zoom input { flex: 1; min-width: 0; appearance: none; height: 14px; background: linear-gradient(#777, #777) center / 100% 1px no-repeat; }
.zoom input::-webkit-slider-thumb { appearance: none; width: 4px; height: 12px; background: #ccc; border: 1px solid #333; }
```
